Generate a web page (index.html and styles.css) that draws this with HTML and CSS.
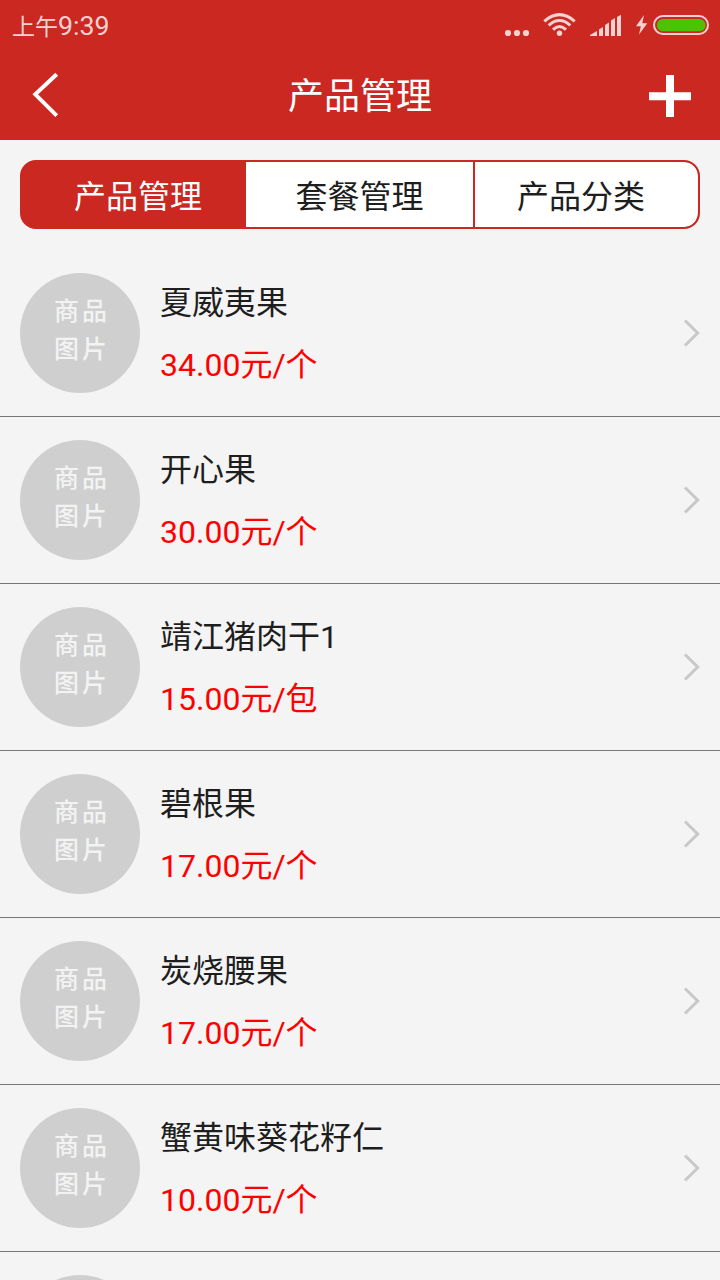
FILE: index.html
```html
<!DOCTYPE html>
<html lang="zh-CN">
<head>
<meta charset="UTF-8">
<title>产品管理</title>
<meta name="viewport" content="width=device-width, initial-scale=1.0">

<link rel="stylesheet" href="styles.css">
</head>

<body>

<svg class="defs" aria-hidden="true">
  <symbol id="arrow" viewBox="0 0 20 32">
    <path d="M3 3.5L15.7 16L3 28.5" fill="none" stroke="#c8c8c8" stroke-width="3"/>
  </symbol>
</svg>

<div class="status">
  <div class="time"><span>上午</span>9:39</div>
  <svg class="status-icons" width="220" height="50" viewBox="0 0 220 50">
    <!-- dots -->
    <circle cx="8" cy="33" r="3.1"/>
    <circle cx="17" cy="33" r="3.1"/>
    <circle cx="26" cy="33" r="3.1"/>
    <!-- wifi -->
    <g class="wifi">
      <path d="M44.3 21.3Q59.5 8 74.7 21.3"/>
      <path d="M48.7 25.4Q59.5 15.6 70.3 25.4"/>
      <path d="M53 29.6Q59.5 23.4 66 29.6"/>
    </g>
    <circle cx="59.5" cy="33.3" r="2.7"/>
    <!-- signal -->
    <path d="M90 36V35L97 31V36Z"/>
    <path d="M99 36V29.5L103 27V36Z"/>
    <path d="M105 36V25L109 22.5V36Z"/>
    <path d="M111 36V20.5L115 18V36Z"/>
    <path d="M117 36V17L121 14.7V36Z"/>
    <!-- charging -->
    <path d="M144 15L136 26.2H140.8L139 34.5L147.3 23.3H142.3Z"/>
    <rect class="battery" x="154" y="16" width="54" height="18" rx="9"/>
    <rect class="level" x="157" y="19" width="48.5" height="12.3" rx="6"/>
  </svg>
</div>

<div class="header">
  <svg width="36" height="50" viewBox="0 0 36 50">
    <path d="M26.7 3.3L5.3 23.3L26.7 44.7" fill="none" stroke="#fff" stroke-width="4"/>
  </svg>
  <h1>产品管理</h1>
  <svg width="42" height="42" viewBox="0 0 42 42">
    <path d="M0 21.3H42M21 0V42" stroke="#fff" stroke-width="8"/>
  </svg>
</div>

<div class="tabs">
  <div class="tab active">产品管理</div>
  <div class="tab">套餐管理</div>
  <div class="tab last">产品分类</div>
</div>

<div class="list">
  <div class="item">
    <div class="thumb">商品<br>图片</div>
    <div class="info">
      <div class="name">夏威夷果</div>
      <div class="price">34.00元/个</div>
    </div>
    <svg class="arrow"><use href="#arrow"/></svg>
  </div>
  <div class="item">
    <div class="thumb">商品<br>图片</div>
    <div class="info">
      <div class="name">开心果</div>
      <div class="price">30.00元/个</div>
    </div>
    <svg class="arrow"><use href="#arrow"/></svg>
  </div>
  <div class="item">
    <div class="thumb">商品<br>图片</div>
    <div class="info">
      <div class="name">靖江猪肉干1</div>
      <div class="price">15.00元/包</div>
    </div>
    <svg class="arrow"><use href="#arrow"/></svg>
  </div>
  <div class="item">
    <div class="thumb">商品<br>图片</div>
    <div class="info">
      <div class="name">碧根果</div>
      <div class="price">17.00元/个</div>
    </div>
    <svg class="arrow"><use href="#arrow"/></svg>
  </div>
  <div class="item">
    <div class="thumb">商品<br>图片</div>
    <div class="info">
      <div class="name">炭烧腰果</div>
      <div class="price">17.00元/个</div>
    </div>
    <svg class="arrow"><use href="#arrow"/></svg>
  </div>
  <div class="item">
    <div class="thumb">商品<br>图片</div>
    <div class="info">
      <div class="name">蟹黄味葵花籽仁</div>
      <div class="price">10.00元/个</div>
    </div>
    <svg class="arrow"><use href="#arrow"/></svg>
  </div>
  <div class="item">
    <div class="thumb"></div>
  </div>
</div>

</body>
</html>
```
FILE: styles.css
```css
:root{
  --bg:#f4f4f4;
  --main:#cb2821;
  --status:#f7d2d0;
  --text:#1e1e1e;
  --price:#ff0000;
}
*{box-sizing:border-box}
body{
  margin:0;
  font-family:Roboto, "Noto Sans CJK SC", sans-serif;
  background:var(--bg);
  color:var(--text);
  height:100vh;
  overflow:hidden;
  display:flex;
  flex-direction:column;
}
.defs{
  display:none;
}

/* STATUS BAR */
.status{
  flex:none;
  height:50px;
  padding-left:12px;
  display:flex;
  justify-content:space-between;
  background:var(--main);
  color:var(--status);
}
.time{
  font-size:26.7px;
  line-height:53px;
}
.time span{
  font-size:23px;
}
.status-icons{
  fill:var(--status);
}
.wifi{
  fill:none;
  stroke:var(--status);
  stroke-width:3;
}
.battery{
  fill:none;
  stroke:var(--status);
  stroke-width:2;
}
.level{
  fill:#48c400;
}

/* HEADER */
.header{
  flex:none;
  height:90px;
  padding:2px 29px 0 30px;
  display:flex;
  align-items:center;
  justify-content:space-between;
  background:var(--main);
  color:white;
}
.header h1{
  margin:0;
  padding:2px 0 0 5px;
  font-size:36px;
  font-weight:400;
  line-height:50px;
}

/* TABS */
.tabs{
  flex:none;
  height:69px;
  margin:20px 20px 21px;
  display:grid;
  grid-template-columns:224px 227px 1fr;
  border:2px solid var(--main);
  border-radius:16px;
  background:var(--main);
  overflow:hidden;
}
.tab{
  height:65px;
  padding-top:1px;
  background:white;
  text-align:center;
  font-size:32px;
  line-height:69px;
}
.active{
  padding-left:8px;
  background:var(--main);
  color:white;
}
.last{
  padding-right:11px;
  border-left:2px solid var(--main);
  border-radius:0 14px 14px 0;
}

/* LIST */
.list{
  flex:1;
  overflow:hidden;
}
.item{
  height:167px;
  padding:0 18px 0 20px;
  display:flex;
  align-items:center;
  border-bottom:1px solid #777;
}
.thumb{
  width:120px;
  height:120px;
  padding:20px 0 0 4px;
  border-radius:50%;
  background:#cfcfcf;
  color:#f3f3f3;
  text-align:center;
  font-size:25px;
  font-weight:500;
  line-height:38px;
  letter-spacing:3px;
}
.info{
  flex:1;
  margin-left:20px;
  padding-top:2px;
  font-size:32px;
  line-height:63px;
}
.price{
  line-height:61px;
  color:var(--price);
}
.arrow{
  width:20px;
  height:32px;
}
```
